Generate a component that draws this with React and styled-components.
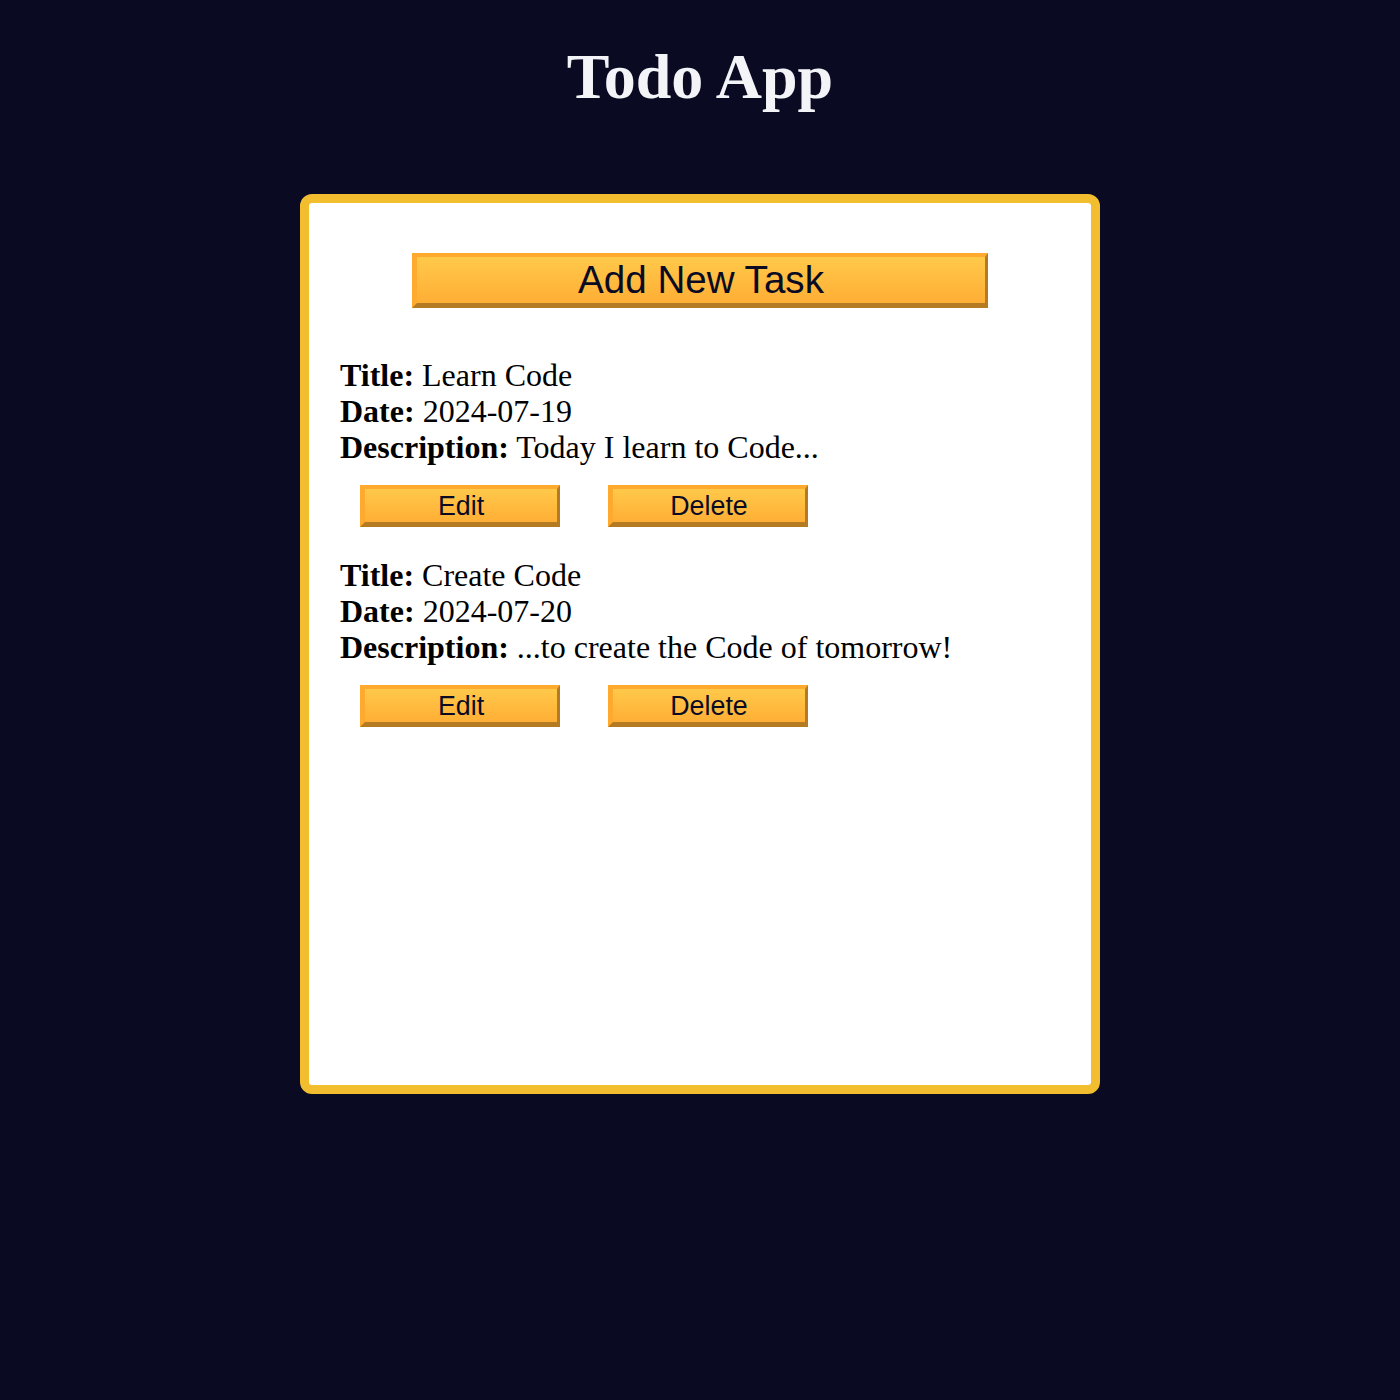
import React from "react";
import styled, { createGlobalStyle, css } from "styled-components";

const GlobalStyle = createGlobalStyle`
  html, body {
    margin: 0;
    padding: 0;
    background: #0a0b23;
  }
  body {
    font-family: "Liberation Serif", "Times New Roman", serif;
  }
`;

const Page = styled.div`
  min-height: 1400px;
  display: flex;
  flex-direction: column;
  align-items: center;
  padding-top: 40px;
  box-sizing: border-box;
`;

const Heading = styled.h1`
  margin: 0 0 80px;
  font-size: 64px;
  font-weight: bold;
  color: #f3f4f8;
  line-height: 74px;
`;

const Card = styled.div`
  width: 800px;
  height: 900px;
  box-sizing: border-box;
  border: 9px solid #f2be30;
  border-radius: 12px;
  background: #ffffff;
  padding: 50px 31px 0;
  color: #000000;
`;

const Button = styled.button`
  box-sizing: border-box;
  border-style: solid;
  border-width: 4px 3px 5px 5px;
  border-color: #ffaa2f #b47b22 #b47b22 #ffaa2f;
  background: linear-gradient(#ffc94a, #ffae35);
  color: #0a0b23;
  font-family: "Liberation Sans", Arial, sans-serif;
  padding: 0;
  cursor: pointer;
  border-radius: 0;

  ${({ $big }) =>
    $big
      ? css`
          display: block;
          width: 576px;
          height: 55px;
          margin: 0 auto 49px;
          font-size: 38.6px;
        `
      : css`
          width: 200px;
          height: 42px;
          padding-top: 2px;
          font-size: 26.8px;
        `}
`;

const Task = styled.div`
  margin-bottom: 30px;
`;

const Line = styled.div`
  font-size: 32px;
  line-height: 36px;
`;

const Label = styled.b`
  font-weight: bold;
`;

const Actions = styled.div`
  display: flex;
  gap: 48px;
  margin: 20px 0 0 20px;
`;

const tasks = [
  { title: "Learn Code", date: "2024-07-19", description: "Today I learn to Code..." },
  { title: "Create Code", date: "2024-07-20", description: "...to create the Code of tomorrow!" },
];

export default function App() {
  return (
    <>
      <GlobalStyle />
      <Page>
        <Heading>Todo App</Heading>
        <Card>
          <Button $big>Add New Task</Button>
          {tasks.map((task) => (
            <Task key={task.title}>
              <Line>
                <Label>Title:</Label> {task.title}
              </Line>
              <Line>
                <Label>Date:</Label> {task.date}
              </Line>
              <Line>
                <Label>Description:</Label> {task.description}
              </Line>
              <Actions>
                <Button>Edit</Button>
                <Button>Delete</Button>
              </Actions>
            </Task>
          ))}
        </Card>
      </Page>
    </>
  );
}
